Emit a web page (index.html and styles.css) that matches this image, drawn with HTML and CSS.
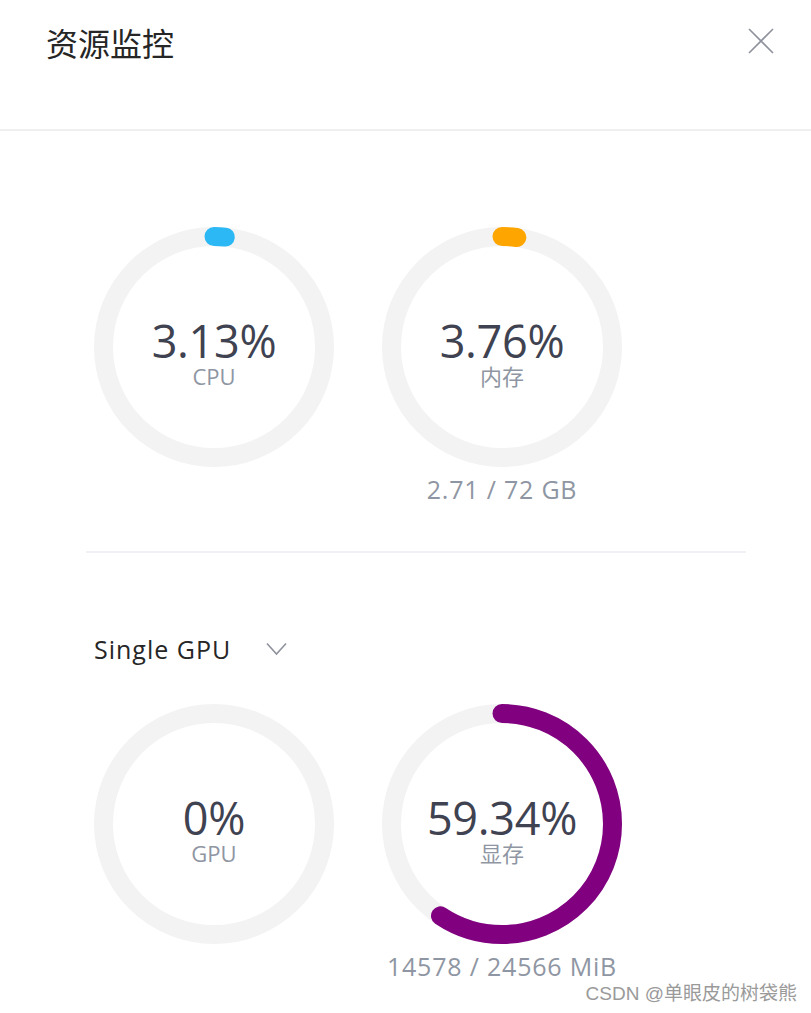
FILE: index.html
```html
<!DOCTYPE html>
<html lang="zh-CN">
<head>
<meta charset="utf-8">
<title>资源监控</title>
<link rel="stylesheet" href="styles.css">
</head>
<body>
<div class="panel">
  <header class="header">
    <h1 class="title">资源监控</h1>
    <button class="close" aria-label="close">
      <svg width="26" height="26" viewBox="0 0 26 26"><path d="M1 1 L25 25 M25 1 L1 25" stroke="#8f929c" stroke-width="1.6" fill="none"/></svg>
    </button>
  </header>

  <section class="section sys">
    <div class="gauges">
      <div class="gauge">
        <div class="ring">
          <svg width="240" height="240" viewBox="0 0 240 240">
            <circle cx="120" cy="120" r="110.5" class="track"/>
            <circle cx="120" cy="120" r="110.5" class="bar" stroke="#2bb8f5" stroke-dasharray="11.5 1000" transform="rotate(-90 120 120)"/>
          </svg>
          <div class="center">
            <div class="value">3.13%</div>
            <div class="label">CPU</div>
          </div>
        </div>
      </div>
      <div class="gauge">
        <div class="ring">
          <svg width="240" height="240" viewBox="0 0 240 240">
            <circle cx="120" cy="120" r="110.5" class="track"/>
            <circle cx="120" cy="120" r="110.5" class="bar" stroke="#ffa500" stroke-dasharray="15 1000" transform="rotate(-90 120 120)"/>
          </svg>
          <div class="center">
            <div class="value">3.76%</div>
            <div class="label">内存</div>
          </div>
        </div>
        <div class="stats">2.71 / 72 GB</div>
      </div>
    </div>
  </section>

  <hr class="divider">

  <section class="section gpu">
    <div class="select">
      <span class="select-text">Single GPU</span>
      <svg class="chev" width="21" height="14" viewBox="0 0 21 14"><path d="M1 1.5 L10.5 12 L20 1.5" stroke="#8f929c" stroke-width="1.6" fill="none"/></svg>
    </div>
    <div class="gauges">
      <div class="gauge">
        <div class="ring">
          <svg width="240" height="240" viewBox="0 0 240 240">
            <circle cx="120" cy="120" r="110.5" class="track"/>
          </svg>
          <div class="center">
            <div class="value">0%</div>
            <div class="label">GPU</div>
          </div>
        </div>
      </div>
      <div class="gauge">
        <div class="ring">
          <svg width="240" height="240" viewBox="0 0 240 240">
            <circle cx="120" cy="120" r="110.5" class="track"/>
            <circle cx="120" cy="120" r="110.5" class="bar" stroke="#800080" stroke-dasharray="412 1000" transform="rotate(-90 120 120)"/>
          </svg>
          <div class="center">
            <div class="value">59.34%</div>
            <div class="label">显存</div>
          </div>
        </div>
        <div class="stats">14578 / 24566 MiB</div>
      </div>
    </div>
  </section>

  <div class="watermark">CSDN @单眼皮的树袋熊</div>
</div>
</body>
</html>
```

FILE: styles.css
```css
* { box-sizing: border-box; }
html, body { margin: 0; padding: 0; background: #fff; }
body {
  font-family: "Open Sans", "Noto Sans CJK SC", sans-serif;
  color: #303133;
}
.panel {
  position: relative;
  width: 811px;
  height: 1013px;
  overflow: hidden;
  display: flex;
  flex-direction: column;
}
.header {
  height: 131px;
  border-bottom: 2px solid #efefef;
  display: flex;
  align-items: flex-start;
  justify-content: space-between;
  padding: 26px 37px 0 46px;
}
.title {
  margin: 0;
  font-family: "Noto Sans CJK SC", sans-serif;
  font-weight: 400;
  font-size: 32px;
  line-height: 32px;
  color: #262626;
}
.close {
  border: 0;
  background: none;
  padding: 0;
  margin-top: 2px;
  width: 26px;
  height: 26px;
  display: block;
}
.close svg { display: block; }
.section { padding-left: 94px; }
.sys { padding-top: 96px; }
.gauges {
  display: flex;
  gap: 48px;
  align-items: flex-start;
}
.gauge {
  width: 240px;
  display: flex;
  flex-direction: column;
  align-items: center;
}
.ring {
  width: 240px;
  height: 240px;
  display: grid;
}
.ring > * { grid-area: 1 / 1; }
.ring svg { display: block; }
.track { fill: none; stroke: #f3f3f3; stroke-width: 19; }
.bar { fill: none; stroke-width: 19; stroke-linecap: round; }
.center {
  display: flex;
  flex-direction: column;
  align-items: center;
  justify-content: center;
  padding-top: 12px;
}
.value {
  font-size: 45px;
  line-height: 44px;
  color: #3f4250;
  letter-spacing: -0.3px;
}
.label {
  margin-top: 2px;
  font-size: 22px;
  line-height: 22px;
  color: #8f96a3;
}
.stats {
  margin-top: 9px;
  font-size: 25px;
  line-height: 26px;
  letter-spacing: 0.8px;
  color: #8f96a3;
  white-space: nowrap;
}
.divider {
  margin: 49px 65px 0 86px;
  border: 0;
  height: 2px;
  background: #f0f0f5;
}
.gpu { padding-top: 82px; }
.select {
  display: flex;
  align-items: center;
  height: 28px;
  margin-bottom: 41px;
}
.select-text {
  font-size: 25px;
  line-height: 28px;
  letter-spacing: 1px;
  color: #262626;
}
.chev { margin-left: 35px; display: block; }
.watermark {
  position: absolute;
  right: 14px;
  bottom: 8px;
  font-family: "Liberation Sans", "Noto Sans CJK SC", sans-serif;
  font-size: 19px;
  line-height: 22px;
  color: #9a9a9a;
}
```
